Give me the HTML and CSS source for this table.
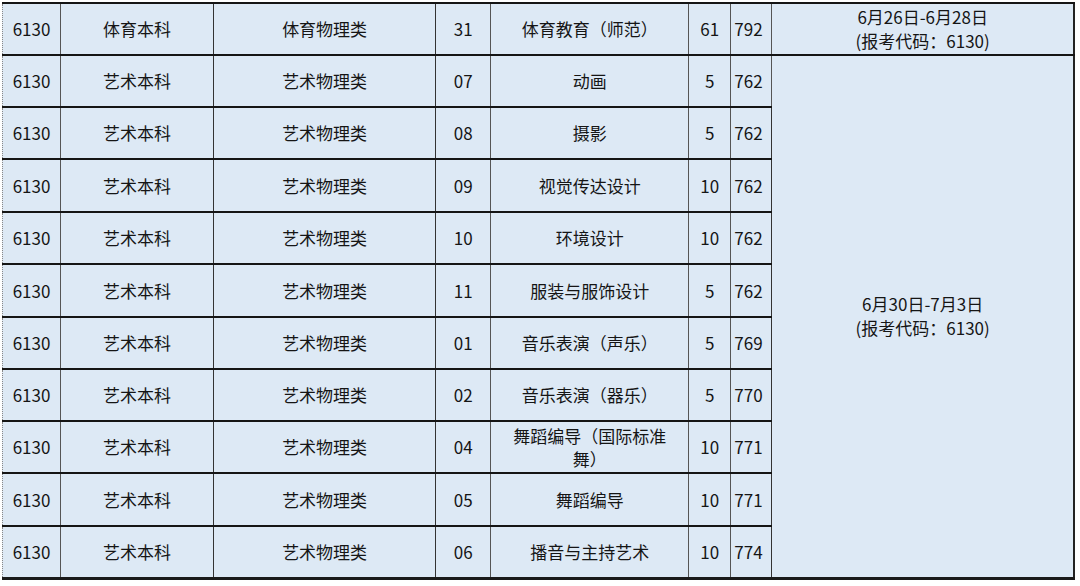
FILE: index.html
```html
<!DOCTYPE html>
<html lang="zh-CN">
<head>
<meta charset="utf-8">
<link rel="stylesheet" href="styles.css">
</head>
<body>
<div class="sheet">
<table class="plan">
  <colgroup>
    <col class="c1"><col class="c2"><col class="c3"><col class="c4"><col class="c5"><col class="c6"><col class="c7"><col class="c8">
  </colgroup>
  <tbody>
    <tr><td>6130</td><td>体育本科</td><td>体育物理类</td><td>31</td><td>体育教育（师范）</td><td>61</td><td class="score">792</td><td class="date">6月26日-6月28日<br>(报考代码：6130)</td></tr>
    <tr><td>6130</td><td>艺术本科</td><td>艺术物理类</td><td>07</td><td>动画</td><td>5</td><td class="score">762</td><td class="date" rowspan="10">6月30日-7月3日<br>(报考代码：6130)</td></tr>
    <tr><td>6130</td><td>艺术本科</td><td>艺术物理类</td><td>08</td><td>摄影</td><td>5</td><td class="score">762</td></tr>
    <tr class="tall"><td>6130</td><td>艺术本科</td><td>艺术物理类</td><td>09</td><td>视觉传达设计</td><td>10</td><td class="score">762</td></tr>
    <tr><td>6130</td><td>艺术本科</td><td>艺术物理类</td><td>10</td><td>环境设计</td><td>10</td><td class="score">762</td></tr>
    <tr class="tall"><td>6130</td><td>艺术本科</td><td>艺术物理类</td><td>11</td><td>服装与服饰设计</td><td>5</td><td class="score">762</td></tr>
    <tr><td>6130</td><td>艺术本科</td><td>艺术物理类</td><td>01</td><td>音乐表演（声乐）</td><td>5</td><td class="score">769</td></tr>
    <tr><td>6130</td><td>艺术本科</td><td>艺术物理类</td><td>02</td><td>音乐表演（器乐）</td><td>5</td><td class="score">770</td></tr>
    <tr><td>6130</td><td>艺术本科</td><td>艺术物理类</td><td>04</td><td class="wrap">舞蹈编导（国际标准<br>舞）</td><td>10</td><td class="score">771</td></tr>
    <tr class="tall"><td>6130</td><td>艺术本科</td><td>艺术物理类</td><td>05</td><td>舞蹈编导</td><td>10</td><td class="score">771</td></tr>
    <tr><td>6130</td><td>艺术本科</td><td>艺术物理类</td><td>06</td><td>播音与主持艺术</td><td>10</td><td class="score">774</td></tr>
  </tbody>
</table>
</div>
</body>
</html>
```
FILE: styles.css
```css
html, body {
  margin: 0;
  padding: 0;
  background: #ffffff;
}
.sheet {
  padding: 2px 0 0 2px;
  width: 1080px;
  height: 586px;
  box-sizing: border-box;
  overflow: hidden;
}
.plan {
  border-collapse: collapse;
  table-layout: fixed;
  width: 1073px;
  background: #dde9f5;
  font-family: "Noto Sans CJK SC", "Noto Sans", sans-serif;
  font-size: 17px;
  color: #151515;
  border-top: 2px solid #111;
  border-bottom: 3px solid #1a1a1a;
  border-right: 2px solid #222;
}
.c1 { width: 58px; }
.c2 { width: 153px; }
.c3 { width: 222px; }
.c4 { width: 55px; }
.c5 { width: 198px; }
.c6 { width: 42px; }
.c7 { width: 41px; }
.c8 { width: 302px; }
.plan tr {
  height: 52px;
}
.plan tr.tall {
  height: 53px;
}
.plan td {
  padding: 0 2px;
  text-align: center;
  vertical-align: middle;
  line-height: 24px;
  border-top: 2px solid #151515;
  border-bottom: 2px solid #151515;
  border-left: 1px solid #555;
  border-right: 1px solid #555;
  white-space: nowrap;
}
.plan td:first-child {
  border-left: 1px dotted #888;
}
.plan td:nth-child(2),
.plan td:nth-child(3) {
  border-right-color: #333;
}
.plan td.score {
  text-align: left;
  padding-left: 3px;
}
.plan td.date {
  border-left: 1.5px solid #333;
  line-height: 24px;
}
.plan td.wrap {
  line-height: 23px;
}
```
